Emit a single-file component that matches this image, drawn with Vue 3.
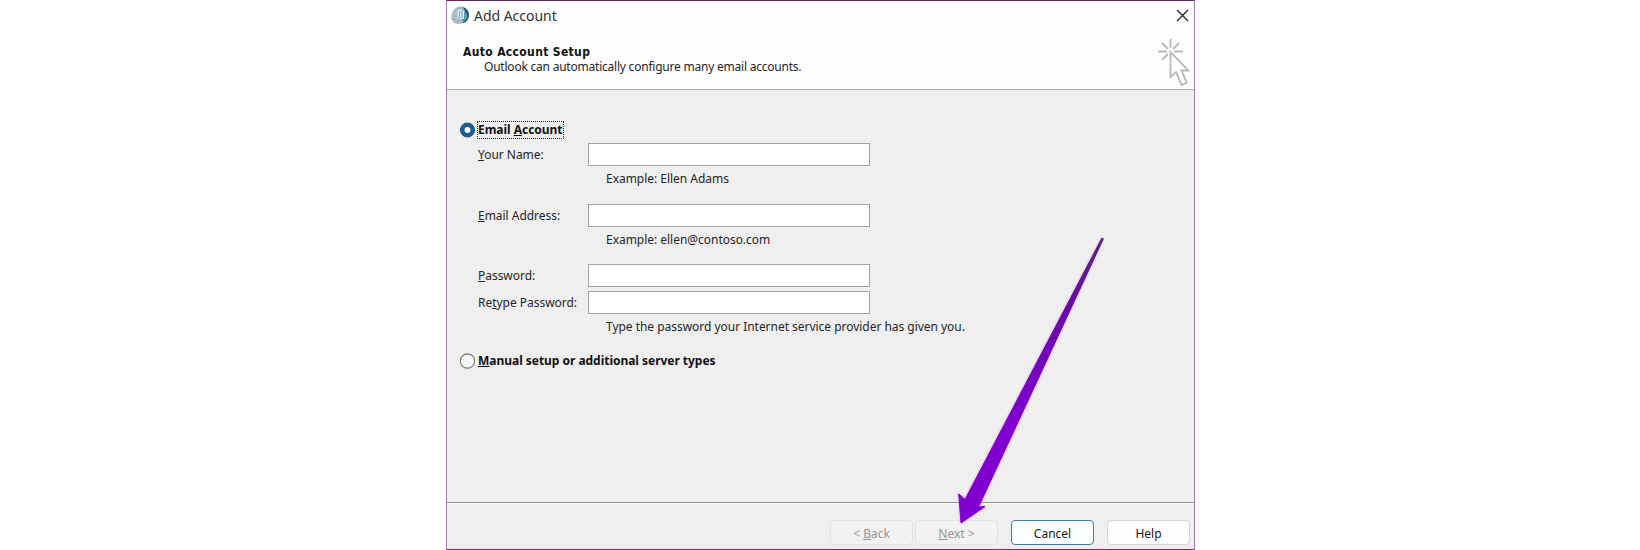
<script setup>
import { ref } from 'vue'

const mode = ref('email')
const fields = [
  { id: 'name', pre: '', key: 'Y', post: 'our Name:', hint: 'Example: Ellen Adams', type: 'text' },
  { id: 'address', pre: '', key: 'E', post: 'mail Address:', hint: 'Example: ellen@contoso.com', type: 'text' },
  { id: 'password', pre: '', key: 'P', post: 'assword:', hint: '', type: 'password' },
  { id: 'retype', pre: 'Re', key: 't', post: 'ype Password:', hint: 'Type the password your Internet service provider has given you.', type: 'password' },
]
</script>

<template>
  <div class="page">
    <div class="window">
      <header class="head">
        <div class="titlebar">
          <svg class="globe" width="20" height="20" viewBox="0 0 20 20">
            <defs>
              <linearGradient id="globeFill" x1="0" y1="0" x2="1" y2="1">
                <stop offset="0" stop-color="#c3d3df" />
                <stop offset="0.5" stop-color="#7fa9c8" />
                <stop offset="1" stop-color="#235078" />
              </linearGradient>
            </defs>
            <ellipse cx="10.500" cy="9" rx="8.300" ry="8.500" fill="url(#globeFill)" />
            <path d="M13 1q6 2 6 8t-6 8.500q4-4 3-9t-3-7.500z" fill="#285d83" />
            <path d="M4 4q4-4 8-3l-4 4-2 6-4 3q-2-5 2-10z" fill="#a9bdcb" />
            <path d="M7.500 5l3.500-2 3 2v8H7.500z" fill="#e3f4fb" />
            <path d="M9.700 5v7M12 4v8" stroke="#649fc4" stroke-width="1" />
            <path d="M1.300 11.500l6.500-1 6 4.500-4.500 3.500-6-1.500z" fill="#b4c6d3" />
            <path d="M2 12.500l6 2 5 .5M8 14.500l-.5 3" stroke="#7d98ab" stroke-width=".7" fill="none" />
            <path d="M13.500 12l3-5 1 4-2.500 4z" fill="#58a09b" />
          </svg>
          <span class="title">Add Account</span>
          <svg class="close" width="13" height="13" viewBox="0 0 13 13">
            <path d="M1 1l11 11M12 1L1 12" stroke="#2b2b2b" stroke-width="1.4" fill="none" />
          </svg>
        </div>
        <div class="intro">
          <div>
            <div class="heading">Auto Account Setup</div>
            <div class="sub">Outlook can automatically configure many email accounts.</div>
          </div>
          <svg class="wizard" width="34" height="50" viewBox="0 0 34 50" fill="none" stroke="#b9b9b9" stroke-width="1.8">
            <path d="M13.500 1v9M1 13.500h9M17 13.500h9M5 5l6 6M22 5l-6 6M5 22l6-6" />
            <path d="M13.500 14v25l5.500-5 5.500 13 5.300-2.300L24.500 32.500h7z" fill="#fff" />
          </svg>
        </div>
      </header>

      <main class="body">
        <label class="choice first">
          <svg width="16" height="16" viewBox="0 0 16 16">
            <circle cx="7.500" cy="8" r="5.300" fill="#fff" stroke="#1e5f8e" stroke-width="4.600" />
          </svg>
          <input v-model="mode" class="native" type="radio" value="email" />
          <span class="choice-text focused">Email <u>A</u>ccount</span>
        </label>

        <div v-for="f in fields" :key="f.id" class="field" :class="f.id">
          <label class="label" :for="f.id">{{ f.pre }}<u>{{ f.key }}</u>{{ f.post }}</label>
          <input :id="f.id" class="input" :type="f.type" />
          <div v-if="f.hint" class="hint">{{ f.hint }}</div>
        </div>

        <label class="choice second">
          <svg width="16" height="16" viewBox="0 0 16 16">
            <circle cx="7.500" cy="8" r="7.100" fill="#f6f6f6" stroke="#777" stroke-width="1.100" />
          </svg>
          <input v-model="mode" class="native" type="radio" value="manual" />
          <span class="choice-text"><u>M</u>anual setup or additional server types</span>
        </label>
      </main>

      <footer class="foot">
        <button class="btn off" disabled>&lt; <u>B</u>ack</button>
        <button class="btn off next" disabled><u>N</u>ext &gt;</button>
        <button class="btn cancel">Cancel</button>
        <button class="btn help">Help</button>
      </footer>

      <svg class="arrow" width="160" height="300" viewBox="950 230 160 300">
        <defs>
          <linearGradient id="arrowFill" x1="0" y1="1" x2="0" y2="0">
            <stop offset="0.35" stop-color="#8000d0" />
            <stop offset="0.75" stop-color="#690aa6" />
            <stop offset="1" stop-color="#52256e" />
          </linearGradient>
        </defs>
        <path d="M1101.800 238.300L1103.300 238.800L978.500 507L985 506.500L961 523L958.800 494L965 499.500Z" fill="url(#arrowFill)" stroke="url(#arrowFill)" stroke-width="1" />
      </svg>
    </div>
  </div>
</template>

<style>
body { background: #fff; }
</style>

<style scoped>
.page {
  display: flex;
  padding-left: 446px;
  height: 550px;
  overflow: hidden;
  font-family: "Noto Sans", "Open Sans", sans-serif;
  font-size: 12px;
  line-height: 20px;
  letter-spacing: -0.03px;
  color: #262626;
}
.window {
  position: relative;
  box-sizing: border-box;
  width: 749px;
  height: 550px;
  display: flex;
  flex-direction: column;
  background: #efefef;
  border: 1px solid #a27aad;
  border-top-color: #5b2a62;
  border-bottom-color: #644068;
}
.head {
  box-sizing: border-box;
  height: 89px;
  background: #fefefe;
  border-bottom: 1px solid #b0b0b0;
}
.titlebar {
  display: flex;
  align-items: center;
  height: 30px;
  padding: 0 5px 0 3px;
}
.globe { margin-top: -1px; }
.close { margin-top: -1px; }
.title {
  flex: 1;
  margin-left: 4px;
  font-size: 14px;
  color: #333;
}
.intro {
  display: flex;
  justify-content: space-between;
  padding: 0 3px 0 16px;
}
.heading {
  margin-top: 11px;
  line-height: 20px;
  font-family: "DejaVu Sans Condensed", "DejaVu Sans", sans-serif;
  font-stretch: condensed;
  font-size: 12px;
  letter-spacing: 0.35px;
  font-weight: 700;
  color: #111;
}
.sub {
  margin: -5px 0 0 21px;
  letter-spacing: -0.22px;
}
.wizard { margin-top: 7px; }
.body {
  box-sizing: border-box;
  height: 412px;
  padding: 30px 0 0 13px;
}
.choice {
  display: flex;
  align-items: center;
  height: 20px;
}
.choice svg { flex: none; }
.native {
  appearance: none;
  width: 0;
  height: 0;
  margin: 0;
}
.choice-text {
  margin-left: 1px;
  padding: 0 1px;
  line-height: 18px;
  font-weight: 700;
  color: #111;
}
.focused { outline: 1px dotted #222; outline-offset: -1px; }
.field {
  display: grid;
  grid-template-columns: 110px 282px;
  margin-left: 18px;
}
.label { height: 23px; line-height: 24px; }
.input {
  box-sizing: border-box;
  width: 282px;
  height: 23px;
  border: 1px solid #a3a3a3;
  border-radius: 0;
  background: #fff;
}
.hint {
  grid-column: 2;
  height: 20px;
  margin: 3px 0 0 18px;
  white-space: nowrap;
}
.name { margin-top: 3px; }
.address { margin-top: 15px; }
.password { margin-top: 14px; }
.retype { margin-top: 4px; }
.second { margin-top: 14px; }
.foot {
  display: flex;
  flex: 1;
  padding: 17px 4px 0 0;
  justify-content: flex-end;
  border-top: 1px solid #939393;
  box-shadow: inset 0 1px #fafafa, inset 0 -3px 2px -1px #f3e4f5;
}
.btn {
  box-sizing: border-box;
  width: 83px;
  height: 25px;
  padding: 2px 0 0;
  font: inherit;
  line-height: 22px;
  color: #191919;
  background: #fdfdfd;
  border: 1px solid #d5d5d5;
  border-radius: 4px;
}
.off {
  color: #969696;
  background: #f2f2f2;
  border-color: #e2e2e2;
}
.next { margin-left: 2px; }
.cancel { margin-left: 13px; border-color: #437f9a; background: #fafeff; }
.help { margin-left: 13px; }
u { text-underline-offset: 1px; }
.arrow {
  position: absolute;
  left: 503px;
  top: 229px;
  filter: drop-shadow(0 0 1px #d58cf5);
}
</style>
